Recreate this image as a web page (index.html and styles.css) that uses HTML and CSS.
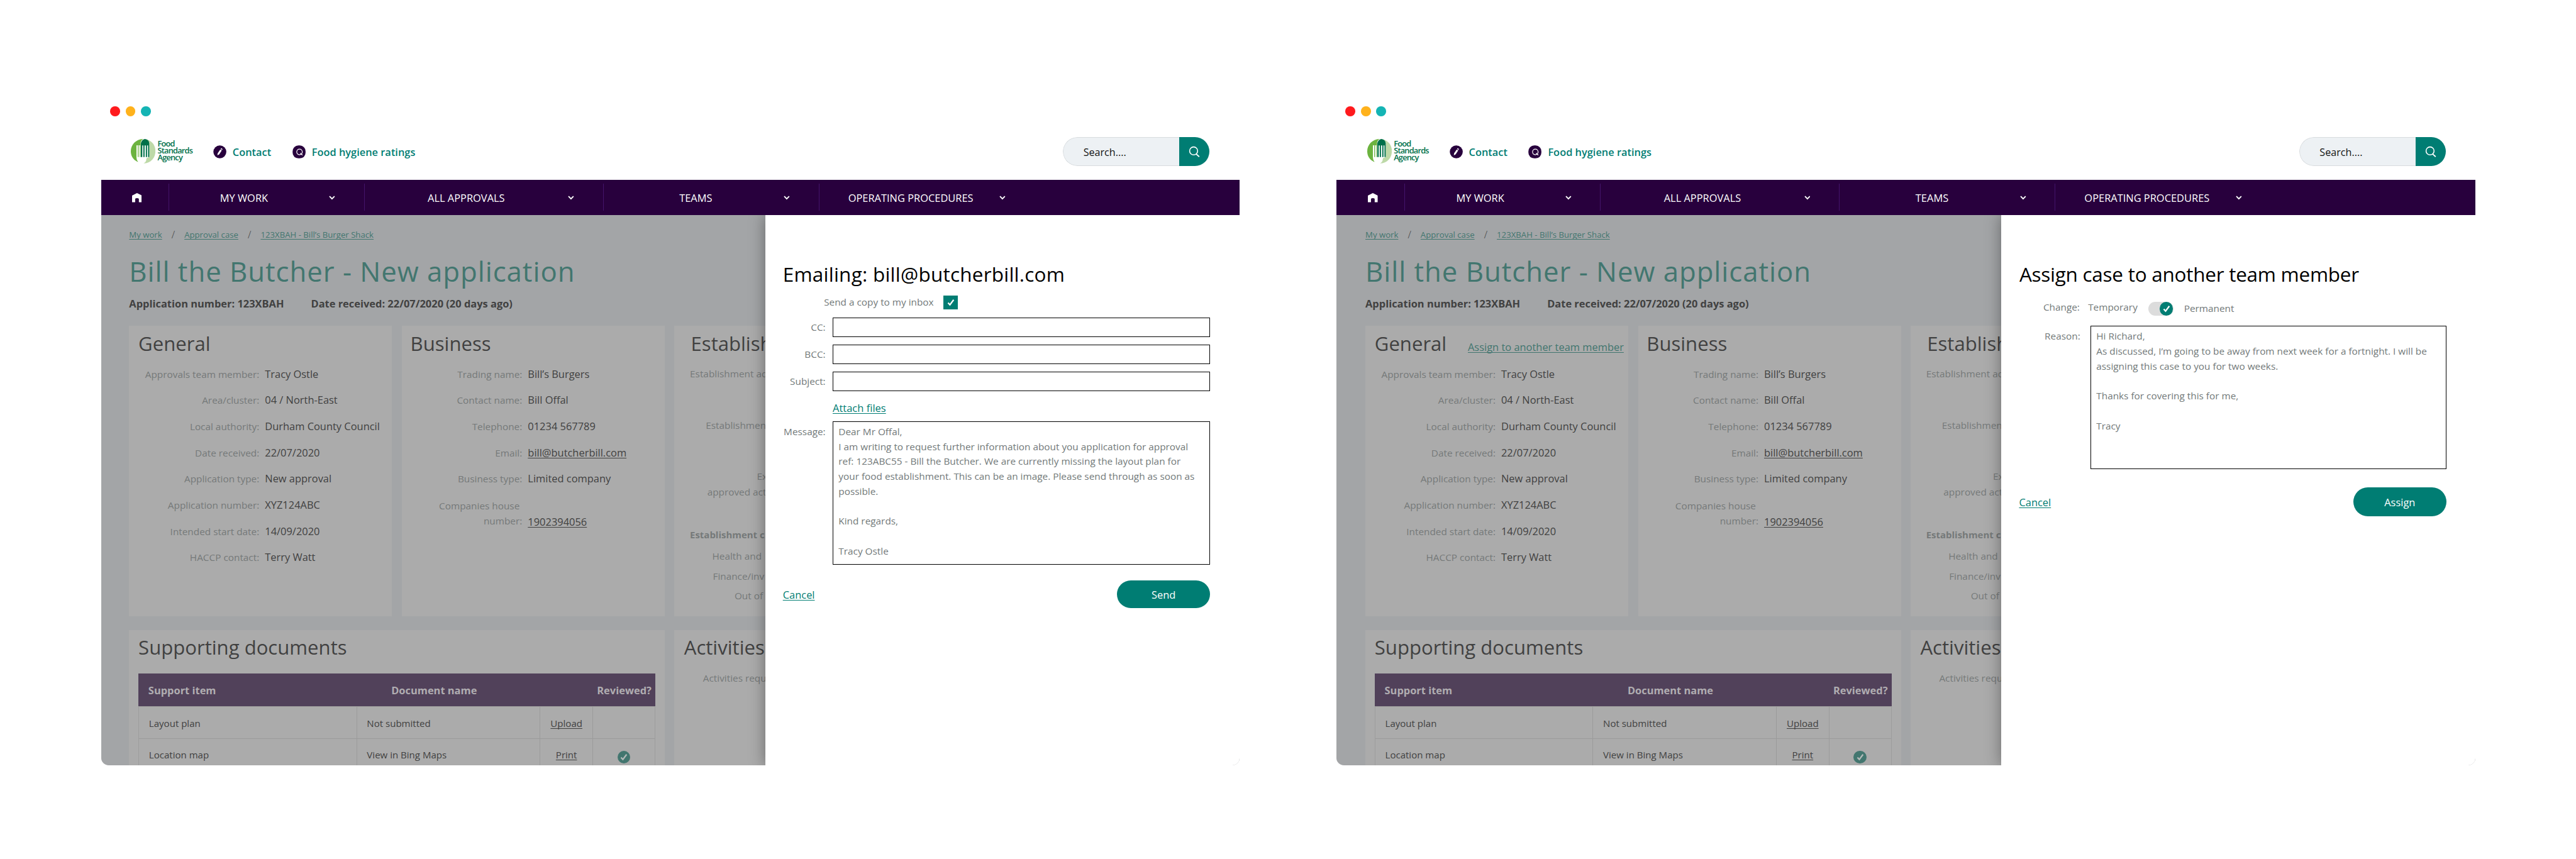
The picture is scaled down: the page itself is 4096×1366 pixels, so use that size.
FILE: index.html
```html
<!DOCTYPE html>
<html lang="en">
<head>
<meta charset="utf-8">
<title>Food Standards Agency approvals</title>
<link rel="stylesheet" href="styles.css">
</head>
<body>
<svg class="defs" aria-hidden="true">
  <symbol id="logo" viewBox="0 0 120 119">
    <path d="M60 0C24 2 0 28 0 60c0 26 15 45 36 52-6-7-8-13-8-24V31h20V15Q52 4 60 0Z" fill="#6cb33f"/>
    <path d="M60 0c36 0 60 26 60 58 0 36-24 60-58 61 10-5 14-12 14-25l14-6V15Q80 2 60 0Z" fill="#bdd9a7"/>
    <path d="M49 88V22Q52 4 68 0q20 3 22 20v68h-6V31h-5v57h-6V31h-6v57h-6V31h-5v57Z" fill="#00704a"/>
    <path d="M28 31h5v60h-5zM39 31h4v60h-4z" fill="#fff"/>
    <path d="M34 31h4v57h-4zM44 31h3v57h-3z" fill="#6cb33f"/>
  </symbol>
  <symbol id="pencil" viewBox="0 0 22 22">
    <circle cx="11" cy="11" r="10.7" fill="#28003d"/>
    <path d="M11.700 7l2.500 1.600-4.300 6.400-3 1.700.5-3.400zM12.300 6l.5-.7q.6-.5 1.300 0l1 .7q.5.5.1 1.100l-.5.8z" fill="#fff"/>
  </symbol>
  <symbol id="rating" viewBox="0 0 22 22">
    <rect x=".3" y=".3" width="21.400" height="21.400" rx="9.500" fill="#28003d"/>
    <circle cx="11.700" cy="11" r="4.600" fill="none" stroke="#fff" stroke-width="1.300"/>
    <path d="M13 13l3.600 3.400" stroke="#fff" stroke-width="1.400"/>
  </symbol>
  <symbol id="home" viewBox="0 0 16 15">
    <path d="M8 0l8 4v11h-5v-5q0-2-3-2t-3 2v5H0V4z" fill="#fff"/>
  </symbol>
  <symbol id="chevron" viewBox="0 0 10 7">
    <path d="M1 1.200l4 4 4-4" fill="none" stroke="#fff" stroke-width="1.900"/>
  </symbol>
  <symbol id="magnifier" viewBox="0 0 20 20">
    <circle cx="8.500" cy="8.500" r="6.800" fill="none" stroke="#fff" stroke-width="1.700"/>
    <path d="M12.500 13.500l5.500 5" stroke="#fff" stroke-width="2"/>
  </symbol>
  <symbol id="tick" viewBox="0 0 12 12">
    <path d="M1.500 6.500l3 3.300 6-8" fill="none" stroke="currentColor" stroke-width="2.300"/>
  </symbol>
</svg>

<main class="board">
  <section class="window">
    <div class="titlebar"><i class="dot dot-red"></i><i class="dot dot-amber"></i><i class="dot dot-teal"></i></div>
    <header class="header">
      <div class="brand"><svg class="brand-mark"><use href="#logo"/></svg><span class="brand-name">Food<br>Standards<br>Agency</span></div>
      <a class="top-link"><svg class="top-icon"><use href="#pencil"/></svg>Contact</a>
      <a class="top-link"><svg class="top-icon"><use href="#rating"/></svg>Food hygiene ratings</a>
      <div class="search"><span class="search-field">Search....</span><span class="search-button"><svg class="search-icon"><use href="#magnifier"/></svg></span></div>
    </header>
    <nav class="nav">
      <span class="nav-home"><svg class="home-icon"><use href="#home"/></svg></span>
      <span class="nav-item nav-work">MY WORK<svg class="chevron"><use href="#chevron"/></svg></span>
      <span class="nav-item nav-approvals">ALL APPROVALS<svg class="chevron"><use href="#chevron"/></svg></span>
      <span class="nav-item nav-teams">TEAMS<svg class="chevron"><use href="#chevron"/></svg></span>
      <span class="nav-item nav-procedures">OPERATING PROCEDURES<svg class="chevron"><use href="#chevron"/></svg></span>
    </nav>
    <div class="page">
      <div class="crumbs"><a>My work</a><i>/</i><a>Approval case</a><i>/</i><a>123XBAH - Bill’s Burger Shack</a></div>
      <h1 class="title">Bill the Butcher - New application</h1>
      <div class="meta"><span>Application number: 123XBAH</span><span>Date received: 22/07/2020 (20 days ago)</span></div>
      <div class="cards">
        <article class="card general">
          <div class="card-head"><h2>General</h2></div>
          <div class="row"><span>Approvals team member:</span><b>Tracy Ostle</b></div>
          <div class="row"><span>Area/cluster:</span><b>04 / North-East</b></div>
          <div class="row"><span>Local authority:</span><b>Durham County Council</b></div>
          <div class="row"><span>Date received:</span><b>22/07/2020</b></div>
          <div class="row"><span>Application type:</span><b>New approval</b></div>
          <div class="row"><span>Application number:</span><b>XYZ124ABC</b></div>
          <div class="row"><span>Intended start date:</span><b>14/09/2020</b></div>
          <div class="row"><span>HACCP contact:</span><b>Terry Watt</b></div>
        </article>
        <article class="card business">
          <div class="card-head"><h2>Business</h2></div>
          <div class="row"><span>Trading name:</span><b>Bill’s Burgers</b></div>
          <div class="row"><span>Contact name:</span><b>Bill Offal</b></div>
          <div class="row"><span>Telephone:</span><b>01234 567789</b></div>
          <div class="row"><span>Email:</span><b><u>bill@butcherbill.com</u></b></div>
          <div class="row"><span>Business type:</span><b>Limited company</b></div>
          <div class="row row-tall"><span>Companies house&nbsp;<br>number:</span><b><u>1902394056</u></b></div>
        </article>
        <article class="card establishment">
          <div class="card-head"><h2>Establish</h2></div>
          <p class="est-address">Establishment ad</p>
          <p class="est-type">Establishment</p>
          <p class="est-existing">Ex</p>
          <p class="est-activity">approved act</p>
          <p class="est-contacts">Establishment c</p>
          <p class="est-health">Health and</p>
          <p class="est-finance">Finance/inv</p>
          <p class="est-hours">Out of</p>
        </article>
      </div>
      <div class="cards cards-lower">
        <article class="card documents">
          <div class="card-head"><h2>Supporting documents</h2></div>
          <div class="docs">
            <div class="docs-row docs-head"><span>Support item</span><span>Document name</span><span></span><span>Reviewed?</span></div>
            <div class="docs-row"><span>Layout plan</span><span>Not submitted</span><span><u>Upload</u></span><span></span></div>
            <div class="docs-row"><span>Location map</span><span>View in Bing Maps</span><span><u>Print</u></span><span><i class="reviewed"><svg class="tick"><use href="#tick"/></svg></i></span></div>
          </div>
        </article>
        <article class="card activities">
          <div class="card-head"><h2>Activities</h2></div>
          <p>Activities requ</p>
        </article>
      </div>
      <aside class="drawer drawer-email">
        <h3>Emailing: bill@butcherbill.com</h3>
        <div class="copy"><label>Send a copy to my inbox</label><i class="checkbox"><svg class="tick"><use href="#tick"/></svg></i></div>
        <div class="field"><label>CC:</label><div class="input"></div></div>
        <div class="field"><label>BCC:</label><div class="input"></div></div>
        <div class="field"><label>Subject:</label><div class="input"></div></div>
        <a class="attach">Attach files</a>
        <div class="message"><label>Message:</label><div class="textarea">Dear Mr Offal,<br>I am writing to request further information about you application for approval<br>ref: 123ABC55 - Bill the Butcher. We are currently missing the layout plan for<br>your food establishment. This can be an image. Please send through as soon as<br>possible.<br><br>Kind regards,<br><br>Tracy Ostle</div></div>
        <div class="actions"><a>Cancel</a><span class="button">Send</span></div>
      </aside>
    </div>
  </section>

  <section class="window window-assign">
    <div class="titlebar"><i class="dot dot-red"></i><i class="dot dot-amber"></i><i class="dot dot-teal"></i></div>
    <header class="header">
      <div class="brand"><svg class="brand-mark"><use href="#logo"/></svg><span class="brand-name">Food<br>Standards<br>Agency</span></div>
      <a class="top-link"><svg class="top-icon"><use href="#pencil"/></svg>Contact</a>
      <a class="top-link"><svg class="top-icon"><use href="#rating"/></svg>Food hygiene ratings</a>
      <div class="search"><span class="search-field">Search....</span><span class="search-button"><svg class="search-icon"><use href="#magnifier"/></svg></span></div>
    </header>
    <nav class="nav">
      <span class="nav-home"><svg class="home-icon"><use href="#home"/></svg></span>
      <span class="nav-item nav-work">MY WORK<svg class="chevron"><use href="#chevron"/></svg></span>
      <span class="nav-item nav-approvals">ALL APPROVALS<svg class="chevron"><use href="#chevron"/></svg></span>
      <span class="nav-item nav-teams">TEAMS<svg class="chevron"><use href="#chevron"/></svg></span>
      <span class="nav-item nav-procedures">OPERATING PROCEDURES<svg class="chevron"><use href="#chevron"/></svg></span>
    </nav>
    <div class="page">
      <div class="crumbs"><a>My work</a><i>/</i><a>Approval case</a><i>/</i><a>123XBAH - Bill’s Burger Shack</a></div>
      <h1 class="title">Bill the Butcher - New application</h1>
      <div class="meta"><span>Application number: 123XBAH</span><span>Date received: 22/07/2020 (20 days ago)</span></div>
      <div class="cards">
        <article class="card general">
          <div class="card-head"><h2>General</h2><a>Assign to another team member</a></div>
          <div class="row"><span>Approvals team member:</span><b>Tracy Ostle</b></div>
          <div class="row"><span>Area/cluster:</span><b>04 / North-East</b></div>
          <div class="row"><span>Local authority:</span><b>Durham County Council</b></div>
          <div class="row"><span>Date received:</span><b>22/07/2020</b></div>
          <div class="row"><span>Application type:</span><b>New approval</b></div>
          <div class="row"><span>Application number:</span><b>XYZ124ABC</b></div>
          <div class="row"><span>Intended start date:</span><b>14/09/2020</b></div>
          <div class="row"><span>HACCP contact:</span><b>Terry Watt</b></div>
        </article>
        <article class="card business">
          <div class="card-head"><h2>Business</h2></div>
          <div class="row"><span>Trading name:</span><b>Bill’s Burgers</b></div>
          <div class="row"><span>Contact name:</span><b>Bill Offal</b></div>
          <div class="row"><span>Telephone:</span><b>01234 567789</b></div>
          <div class="row"><span>Email:</span><b><u>bill@butcherbill.com</u></b></div>
          <div class="row"><span>Business type:</span><b>Limited company</b></div>
          <div class="row row-tall"><span>Companies house&nbsp;<br>number:</span><b><u>1902394056</u></b></div>
        </article>
        <article class="card establishment">
          <div class="card-head"><h2>Establish</h2></div>
          <p class="est-address">Establishment ad</p>
          <p class="est-type">Establishment</p>
          <p class="est-existing">Ex</p>
          <p class="est-activity">approved act</p>
          <p class="est-contacts">Establishment c</p>
          <p class="est-health">Health and</p>
          <p class="est-finance">Finance/inv</p>
          <p class="est-hours">Out of</p>
        </article>
      </div>
      <div class="cards cards-lower">
        <article class="card documents">
          <div class="card-head"><h2>Supporting documents</h2></div>
          <div class="docs">
            <div class="docs-row docs-head"><span>Support item</span><span>Document name</span><span></span><span>Reviewed?</span></div>
            <div class="docs-row"><span>Layout plan</span><span>Not submitted</span><span><u>Upload</u></span><span></span></div>
            <div class="docs-row"><span>Location map</span><span>View in Bing Maps</span><span><u>Print</u></span><span><i class="reviewed"><svg class="tick"><use href="#tick"/></svg></i></span></div>
          </div>
        </article>
        <article class="card activities">
          <div class="card-head"><h2>Activities</h2></div>
          <p>Activities requ</p>
        </article>
      </div>
      <aside class="drawer drawer-assign">
        <h3>Assign case to another team member</h3>
        <div class="change"><label>Change:</label><span class="option-off">Temporary</span><i class="toggle"><i class="knob"><svg class="tick"><use href="#tick"/></svg></i></i><span class="option-on">Permanent</span></div>
        <div class="message"><label>Reason:</label><div class="textarea">Hi Richard,<br>As discussed, I’m going to be away from next week for a fortnight. I will be<br>assigning this case to you for two weeks.<br><br>Thanks for covering this for me,<br><br>Tracy</div></div>
        <div class="actions"><a>Cancel</a><span class="button">Assign</span></div>
      </aside>
    </div>
  </section>
</main>
</body>
</html>
```
FILE: styles.css
```css
* { box-sizing: border-box; }
html, body { margin: 0; background: #fff; }
body { width: 4096px; height: 1366px; overflow: hidden; font-family: "Open Sans", "Noto Sans", sans-serif; }
h1, h2, h3, p { margin: 0; font-weight: 400; }
i { font-style: normal; }
b { font-weight: 400; }
svg { display: block; flex: none; }
.defs { position: absolute; width: 0; height: 0; }

/* laid out on a 4161px wide board, scaled to the viewport */
.board { zoom: 0.98438; width: 4161px; height: 1388px; padding: 150.800px 0 0 163.500px; display: flex; align-items: flex-start; gap: 156.500px; font-size: 16.700px; white-space: nowrap; }
.window { --inset: 0px; width: 1839px; height: 1086px; flex: none; display: flex; flex-direction: column; overflow: hidden; border-radius: 0 0 12px 12px; }
.window-assign { --inset: 1.4px; }

.titlebar { height: 57.500px; flex: none; padding: 0 0 0 14.200px; display: flex; align-items: center; gap: 9px; }
.dot { width: 16px; height: 16px; border-radius: 50%; }
.dot-red { background: #ff1a1d; }
.dot-amber { background: #ffb21c; }
.dot-teal { background: #14b4b4; }

.header { height: 82px; flex: none; padding: 12.800px calc(48.500px - var(--inset)) 0 calc(47.700px + var(--inset)); display: flex; align-items: flex-start; }
.brand { display: flex; width: 133px; padding-top: 3.700px; gap: 3.500px; }
.brand-mark { width: 39.800px; height: 39.500px; }
.brand-name { margin-top: 2px; font: 600 13px/11.300px "Open Sans", sans-serif; letter-spacing: -0.800px; color: #00704a; }
.top-link { display: flex; align-items: center; gap: 10px; height: 49px; margin-right: 34px; font-weight: 600; font-size: 16.670px; color: #007d73; }
.top-icon { width: 21.500px; height: 21.500px; }
.search { margin-left: auto; display: flex; width: 237px; height: 46.700px; border-radius: 23.300px; overflow: hidden; }
.search-field { flex: 1; padding-left: 32px; border: 1px solid #d8dcdf; border-right: 0; border-radius: 23.300px 0 0 23.300px; background: #edf1f4; font-size: 16.400px; line-height: 48px; color: #111; }
.search-button { width: 49px; padding: 15px 0 0 15.500px; background: #007d73; }
.search-icon { width: 19px; height: 19px; }

.nav { position: relative; z-index: 1; height: 56.700px; flex: none; padding-left: var(--inset); display: flex; align-items: center; background: #28003d; color: #fff; }
.nav-home { width: 108.300px; padding: 2px 0 0 49.500px; }
.home-icon { width: 16px; height: 15px; }
.nav-item { height: 43.500px; display: flex; align-items: center; justify-content: space-between; padding-right: 46.500px; padding-top: 1px; border-left: 1.700px solid #43136a; }
.chevron { width: 10px; height: 7px; margin-top: 1px; }
.nav-work { width: 316px; padding-left: 82.500px; }
.nav-approvals { width: 386px; padding-left: 102px; }
.nav-teams { width: 348.500px; padding-left: 122.500px; }
.nav-procedures { width: 348.500px; padding-left: 46.800px; }

.page { position: relative; flex: 1; padding: 23px 0 0 calc(45.100px + var(--inset)); background: #a3a5a7; color: #414141; }
.crumbs { display: flex; height: 20px; font-size: 13.400px; line-height: 20px; color: #42766f; }
.crumbs a, .card-head a, .attach, .actions a, u { text-decoration: underline; text-decoration-thickness: 1px; text-underline-offset: 2px; text-decoration-skip-ink: none; }
.crumbs i { width: 36px; text-align: center; font-size: 16px; font-weight: 300; color: #414141; }
.title { margin: 17.900px 0 0 0; font-size: 44.500px; line-height: 60px; letter-spacing: 0.950px; color: #42766f; }
.meta { margin-top: 10.500px; display: flex; gap: 43.700px; font-weight: 700; line-height: 24px; }

/* the cards run on beneath the drawer, so the rows stop just past its edge */
.cards { margin-top: 23.800px; width: 1029px; height: 469.700px; display: flex; gap: 15px; overflow: hidden; }
.cards-lower { margin-top: 22.300px; height: 219px; }
.card { flex: none; padding: 8.900px 0 0 15px; background: #ababab; }
.card-head { display: flex; align-items: baseline; justify-content: space-between; height: 40px; margin-bottom: 7.900px; padding-right: 6.800px; line-height: 40px; }
.card-head h2 { font-size: 31.600px; }
.card-head a { color: #42766f; }
.general { width: 424.200px; margin-right: 1.200px; }
.row { height: 42.300px; display: flex; align-items: baseline; gap: 9.200px; line-height: 42.300px; }
.row span { width: 195.200px; text-align: right; font-size: 15.600px; color: #757979; }
.business { width: 425px; padding-left: 14px; }
.business .row span { width: 180.500px; }
.business .row-tall { height: 60px; align-items: flex-end; line-height: 24.300px; }
.business .row-tall b { line-height: 22px; }
.establishment { width: 740px; padding-left: 27px; }
.establishment p { height: 24px; font-size: 15.600px; line-height: 24px; color: #757979; margin-left: -1.500px; }
.est-address { margin-top: 17px; }
.est-type { margin-top: 60px; padding-left: 25.500px; }
.est-existing { margin-top: 58px; padding-left: 108px; }
.est-activity { margin-top: 1px; padding-left: 28px; }
.establishment .est-contacts { margin-top: 45px; font-weight: 700; font-size: 15.200px; }
.est-health { margin-top: 10.500px; padding-left: 36px; }
.est-finance { margin-top: 8.500px; padding-left: 37px; }
.est-hours { margin-top: 8px; padding-left: 72px; }

.documents { width: 865.400px; padding-top: 8.200px; }
.docs { margin-top: 21.800px; width: 834.800px; border: solid #9d9d9d; border-width: 0 1px; }
.documents .card-head { margin: 0; }
.docs-row { display: grid; grid-template-columns: 351px 296px 85.700px 1fr; height: 52px; border-bottom: 1px solid #9b9b9b; font-size: 15.300px; line-height: 54px; }
.docs-row span { padding-left: 16px; border-left: 1px solid #9b9b9b; }
.docs-row span:first-child { border-left: 0; }
.docs-row span:nth-child(3) { padding: 0; text-align: center; }
.docs-row span:nth-child(4) { padding: 0; display: flex; justify-content: center; }
.docs-head { height: 54px; margin: 0 -1px; background: #51415a; color: #b0adb1; font-weight: 700; font-size: 16.700px; }
.docs-head span { border: 0; }
.docs-head span:nth-child(2) { padding-left: 57.500px; }
.docs-head span:nth-child(4) { padding-left: 2px; }
.docs-row:last-child { line-height: 52px; }
.reviewed { width: 21px; height: 21px; margin-top: 18.500px; border-radius: 50%; background: #42766f; color: #b4bab9; display: grid; place-items: center; }
.tick { width: 12px; height: 12px; }
.activities { width: 740px; padding-top: 8.200px; padding-left: 16px; }
.activities p { margin: 13px 0 0 30.500px; font-size: 15.600px; line-height: 34px; color: #757979; }

.drawer { position: absolute; left: calc(1072.500px + var(--inset)); top: 0; right: 0; bottom: 0; padding: 73.900px calc(47.500px - var(--inset)) 0 28.500px; background: #fff; box-shadow: 0 0 24px rgba(0, 0, 0, 0.38); font-size: 15.600px; color: #727979; }
.drawer h3 { font-size: 32px; line-height: 44px; color: #000; }
.drawer-email h3 { letter-spacing: 0.230px; }
.drawer-assign h3 { margin-left: 0.500px; letter-spacing: -0.270px; }
.copy { margin-top: 12.400px; padding-left: 66.500px; display: flex; gap: 16px; height: 23px; line-height: 21px; }
.checkbox { width: 23px; height: 23px; display: grid; place-items: center; background: #007d73; color: #fff; }
.field { display: flex; height: 31.500px; margin-top: 13px; line-height: 32px; }
.field + .field { margin-top: 12px; }
.drawer label { text-align: right; }
.field label, .message label { width: 69px; margin-right: 11.500px; flex: none; }
.input { flex: 1; border: 1px solid #000; background: #fff; }
.attach { display: block; margin: 15px 0 0 80.500px; font-size: 16.800px; line-height: 24px; color: #007d73; }
.message { display: flex; margin-top: 9.800px; height: 231.300px; line-height: 24.100px; }
.message label { padding-top: 5px; }
.textarea { flex: 1; padding: 4px 0 0 8.500px; border: 1px solid #000; background: #fff; }
.actions { display: flex; justify-content: space-between; margin-top: 25.400px; height: 45.400px; line-height: 47px; font-size: 16.700px; }
.actions a { color: #007d73; }
.button { width: 151px; border-radius: 23.300px; background: #007d73; color: #fff; text-align: center; }

.change { display: flex; margin-top: 22.400px; height: 23px; line-height: 18px; }
.change label { width: 98px; margin-right: 13.500px; }
.toggle { display: flex; justify-content: flex-end; width: 41px; height: 23px; margin: 0 17px; padding: 0.700px; border-radius: 11.500px; background: #dcdcdc; }
.knob { width: 21.500px; height: 21.500px; border-radius: 50%; display: grid; place-items: center; background: #007d73; color: #fff; }
.option-on { line-height: 22px; }
.drawer-assign .message { margin-top: 16.300px; }
.drawer-assign .message label { width: 98.800px; margin-right: 16.500px; }
.drawer-assign .actions { margin-top: 29.300px; height: 46.700px; line-height: 49px; }
```
